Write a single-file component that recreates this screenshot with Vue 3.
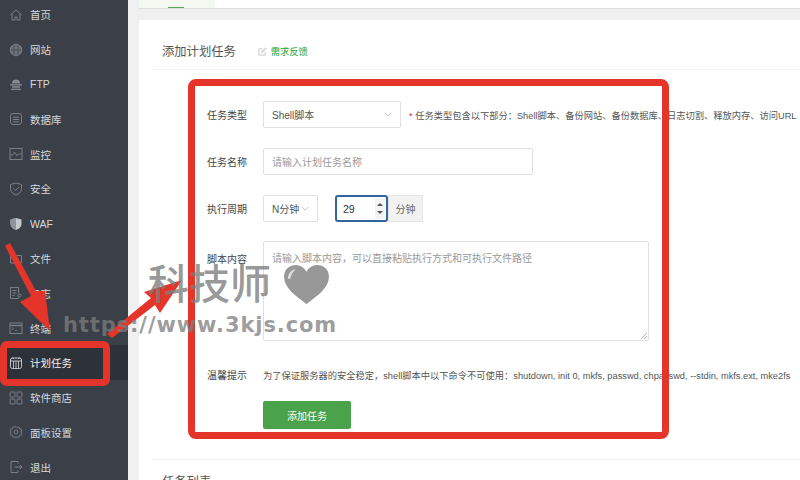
<script setup>
const menus = [
  { name: "首页", icon: "home" },
  { name: "网站", icon: "globe" },
  { name: "FTP", icon: "ftp" },
  { name: "数据库", icon: "db" },
  { name: "监控", icon: "monitor" },
  { name: "安全", icon: "safe" },
  { name: "WAF", icon: "waf" },
  { name: "文件", icon: "file" },
  { name: "日志", icon: "log" },
  { name: "终端", icon: "term" },
  { name: "计划任务", icon: "cron", active: true },
  { name: "软件商店", icon: "soft" },
  { name: "面板设置", icon: "gear" },
  { name: "退出", icon: "exit" },
];
</script>

<template>
  <div class="page">
    <aside class="sidebar">
      <ul class="menu">
        <li v-for="m in menus" :key="m.name" :class="{ active: m.active }">
          <svg class="icon" viewBox="0 0 14 14" fill="none" stroke="#79808a" stroke-width="1">
            <path v-if="m.icon === 'home'" d="M1.5 7 7 2l5.500 5M3 6v6h3V9h2v3h3V6" />
            <g v-else-if="m.icon === 'globe'">
              <circle cx="7" cy="7" r="5.800" fill="#6b727b" />
              <path d="M5 1.800v10.400M9 1.800v10.400M1.500 7h11" stroke="#4a5159" />
            </g>
            <g v-else-if="m.icon === 'ftp'">
              <path d="M3 6.500a4 4 0 0 1 8 0z" fill="#858b93" stroke="none" />
              <path d="M1 7.800h12M3 10h8M2 12.300h10" stroke="#858b93" stroke-width="1.300" />
            </g>
            <g v-else-if="m.icon === 'db'">
              <rect x="1.500" y="1.500" width="11" height="11" rx="2.500" />
              <path d="M4 5.200h6M4 7.500h6M4 9.800h6" />
            </g>
            <g v-else-if="m.icon === 'monitor'">
              <rect x="1" y="1.500" width="12" height="11" />
              <path d="M1 8h3l1.500-3L8 9l1-2h4" stroke-width=".8" />
            </g>
            <path v-else-if="m.icon === 'safe'" d="M7 1 12.500 2.500V7c0 3-2.500 5-5.500 6C4 12 1.500 10 1.500 7V2.500zM4.500 6.500 6.500 8.500 9.800 5.200" />
            <g v-else-if="m.icon === 'waf'">
              <path d="M7 1 12.500 2.500V7c0 3-2.500 5-5.500 6C4 12 1.500 10 1.500 7V2.500z" fill="#c4c8cc" stroke="none" />
              <path d="M7 1V13C4 12 1.500 10 1.500 7V2.500z" fill="#8e949b" stroke="none" />
            </g>
            <path v-else-if="m.icon === 'file'" d="M1.500 3h4l1 1.500h6V12h-11z" />
            <g v-else-if="m.icon === 'log'">
              <path d="M9.500 11.500v1h-8v-11h8V7" />
              <path d="M3.500 4.500h4M3.500 7h4M3.500 9.500h2" />
              <circle cx="10.500" cy="9.500" r="1.500" />
            </g>
            <g v-else-if="m.icon === 'term'">
              <rect x="1" y="2" width="12" height="10.500" />
              <path d="M1 4.500h12" stroke-width="1.400" />
              <path d="m3 6.500 1.500 1.300L3 9M6 9.500h2" stroke-width=".8" />
            </g>
            <g v-else-if="m.icon === 'cron'">
              <rect x="1.500" y="2" width="11" height="10.500" rx="2" stroke="#c2c6cb" />
              <path d="M1.500 5h11M4.500 5v7.500M7 5v7.500M9.500 5v7.500M4 1v2M10 1v2" stroke="#c2c6cb" stroke-width=".9" />
            </g>
            <g v-else-if="m.icon === 'soft'">
              <rect x="1" y="1" width="5" height="5" rx=".8" />
              <rect x="8" y="1" width="5" height="5" rx=".8" />
              <rect x="1" y="8" width="5" height="5" rx=".8" />
              <rect x="8" y="8" width="5" height="5" rx=".8" />
            </g>
            <g v-else-if="m.icon === 'gear'">
              <path d="M7 1.200 8.300 2.600 10.200 2.200 10.800 4 12.700 4.700 12.200 6.600 13 7 12.200 8.400 12.700 9.800 10.800 10.400 10.200 12.200 8.300 11.800 7 13 5.700 11.800 3.800 12.200 3.200 10.400 1.300 9.800 1.800 8.400 1 7 1.800 5.600 1.300 4.200 3.200 3.600 3.800 1.800 5.700 2.200z" />
              <circle cx="7" cy="7" r="2" />
            </g>
            <path v-else d="M9 3.500V1.500H2v11h7v-2M5.500 7H13M11 5l2 2-2 2" />
          </svg>
          <span>{{ m.name }}</span>
        </li>
      </ul>
    </aside>

    <main class="main">
      <div class="topbar">
        <div class="tab"></div>
      </div>
      <section class="card">
        <header class="head">
          <h2>添加计划任务</h2>
          <svg class="edit" viewBox="0 0 10 10" fill="none" stroke="#b5b5b5" stroke-width=".8">
            <path d="M8 5.500V9H1V2h4M4 6l.5-1.500L8.200 1 9 1.800 5.500 5.500z" />
          </svg>
          <a>需求反馈</a>
        </header>

        <div class="form">
          <div class="row type-row">
            <label>任务类型</label>
            <div class="select wide">
              <span>Shell脚本</span>
              <svg class="caret" viewBox="0 0 10 6" fill="none" stroke="#b5b5b5"><path d="m1 1 4 4 4-4" /></svg>
            </div>
            <p class="hint"><b>*</b> 任务类型包含以下部分：Shell脚本、备份网站、备份数据库、日志切割、释放内存、访问URL</p>
          </div>

          <div class="row name-row">
            <label>任务名称</label>
            <div class="input name">请输入计划任务名称</div>
          </div>

          <div class="row period-row">
            <label>执行周期</label>
            <div class="select short">
              <span>N分钟</span>
              <svg class="caret" viewBox="0 0 10 6" fill="none" stroke="#b5b5b5"><path d="m1 1 4 4 4-4" /></svg>
            </div>
            <div class="number">
              <span>29</span>
              <div class="spin">
                <i class="up"></i>
                <i class="down"></i>
              </div>
            </div>
            <div class="addon">分钟</div>
          </div>

          <div class="row script-row">
            <label>脚本内容</label>
            <div class="textarea">
              请输入脚本内容，可以直接粘贴执行方式和可执行文件路径
              <svg class="grip" viewBox="0 0 8 8" stroke="#888" stroke-width=".8"><path d="M1 8 8 1M4.500 8 8 4.500" /></svg>
            </div>
          </div>

          <div class="row tip-row">
            <label>温馨提示</label>
            <p class="tip">为了保证服务器的安全稳定，shell脚本中以下命令不可使用：shutdown, init 0, mkfs, passwd, chpasswd, --stdin, mkfs.ext, mke2fs</p>
          </div>

          <button class="submit">添加任务</button>
        </div>

        <h2 class="list-title">任务列表</h2>
      </section>
    </main>

    <!-- 标注和水印 -->
    <div class="mark-box"></div>
    <div class="mark-menu"></div>
    <svg class="arrows" viewBox="0 0 800 480">
      <path d="M5 246 10 243 36 291 45 291 50 331 20 302 31 296z" fill="#e5352a" />
      <path d="M107 334 151 298 144 292 182 280 160 313 155 305 112 338z" fill="#e5352a" />
    </svg>
    <div class="wm-title">科技师</div>
    <svg class="wm-heart" viewBox="0 0 48 42">
      <path d="M24 41C12 32 1 24 1 13 1 5 7 1 13 1c5 0 9 3 11 7 2-4 6-7 11-7 6 0 12 4 12 12 0 11-11 19-23 28z" fill="#989898" />
      <path d="M5 15c0-5 3-9 8-10-3 3-5 6-5.500 10z" fill="#dedede" />
    </svg>
    <div class="wm-url">https://www.3kjs.com</div>
  </div>
</template>

<style>
html,
body {
  margin: 0;
  overflow: hidden;
}
</style>

<style scoped>
.page {
  position: relative;
  display: flex;
  width: 800px;
  height: 480px;
  overflow: hidden;
  font-family: "Liberation Sans", "Noto Sans CJK SC", sans-serif;
  background: #f0f0f0;
  color: #555;
}
.sidebar {
  flex: none;
  width: 128px;
  background: #3b4048;
}
.menu {
  list-style: none;
  margin: -2.500px 0 0;
  padding: 0;
}
.menu li {
  display: flex;
  align-items: center;
  height: 34.8px;
  padding-left: 9px;
  font-size: 10.500px;
  color: #d6d8da;
}
.menu li.active {
  background: #2d3138;
  color: #f2f2f2;
}
.icon {
  flex: none;
  width: 14px;
  height: 14px;
  margin-right: 7px;
}
.main {
  flex: 1;
  min-width: 0;
  padding-left: 11px;
}
.topbar {
  height: 8px;
  background: #fff;
  border-bottom: 1px solid #dcdcdc;
  margin-bottom: 11px;
}
.tab {
  position: relative;
  width: 76px;
  height: 8px;
  background: #f3f8f1;
}
.tab::after {
  content: "";
  position: absolute;
  left: 29px;
  bottom: 0;
  width: 16px;
  height: 1px;
  background: #5aa55a;
}
.card {
  height: 460px;
  background: #fff;
}
.head {
  display: flex;
  align-items: center;
  height: 36px;
  margin-left: 13px;
  padding: 13px 0 0 10px;
  border-bottom: 1px solid #f2f2f2;
}
h2 {
  margin: 0;
  font-size: 12.300px;
  font-weight: 400;
  color: #555;
}
.edit {
  width: 9px;
  height: 9px;
  margin: 0 4px 0 22px;
}
.head a {
  font-size: 9.250px;
  color: #20a53a;
}
.form {
  padding: 31px 0 0 68px;
  white-space: nowrap;
}
.row {
  display: flex;
  align-items: center;
}
label {
  flex: none;
  width: 56px;
  font-size: 10px;
  color: #444;
}
.select,
.input,
.textarea {
  box-sizing: border-box;
  border: 1px solid #e0e0e0;
  border-radius: 2px;
  background: #fff;
  font-size: 10px;
}
.select {
  display: flex;
  align-items: center;
  justify-content: space-between;
  height: 27px;
  padding: 0 8px;
  color: #555;
}
.select.wide {
  width: 138px;
}
.select.short {
  width: 55px;
}
.caret {
  width: 8px;
  height: 5px;
}
.hint {
  margin: 0 0 0 8px;
  font-size: 9.250px;
  color: #555;
}
.hint b {
  color: #e02020;
  font-weight: 400;
}
.name-row {
  margin-top: 20px;
}
.input {
  display: flex;
  align-items: center;
  height: 27px;
  padding-left: 8px;
  color: #999;
}
.input.name {
  width: 270px;
}
.period-row {
  margin-top: 20px;
}
.number {
  box-sizing: border-box;
  display: flex;
  align-items: center;
  justify-content: space-between;
  width: 53px;
  height: 27px;
  margin-left: 17px;
  padding: 0 1px 0 6px;
  border: 2px solid #34659f;
  border-radius: 3px;
  font-size: 10.500px;
  color: #333;
}
.spin {
  display: flex;
  flex-direction: column;
  align-items: center;
  justify-content: space-between;
  box-sizing: border-box;
  width: 10px;
  height: 21px;
  padding: 5px 0;
  background: #f3f3f3;
}
.spin i {
  width: 0;
  height: 0;
  border-left: 3px solid transparent;
  border-right: 3px solid transparent;
}
.spin .up {
  border-bottom: 3px solid #555;
}
.spin .down {
  border-top: 3px solid #555;
}
.addon {
  box-sizing: border-box;
  display: flex;
  align-items: center;
  justify-content: center;
  width: 35px;
  height: 27px;
  background: #f2f2f2;
  border: 1px solid #e6e6e6;
  font-size: 10px;
  color: #666;
}
.script-row {
  align-items: flex-start;
  margin-top: 19px;
}
.script-row label {
  margin-top: 10px;
}
.textarea {
  position: relative;
  width: 386px;
  height: 100px;
  padding: 8px 8px;
  color: #999;
}
.grip {
  position: absolute;
  right: 1px;
  bottom: 1px;
  width: 7px;
  height: 7px;
}
.tip-row {
  margin-top: 26px;
}
.tip {
  margin: 0;
  font-size: 9.250px;
  color: #555;
}
.submit {
  display: block;
  width: 88px;
  height: 28px;
  margin: 19px 0 0 56px;
  padding: 0;
  border: 0;
  border-radius: 2px;
  background: #4aa24a;
  color: #fff;
  font: inherit;
  font-size: 10px;
}
.list-title {
  margin: 30px 0 0 13px;
  padding: 12px 0 0 10px;
  border-top: 1px solid #f2f2f2;
}
.mark-box {
  position: absolute;
  left: 188px;
  top: 79px;
  box-sizing: border-box;
  width: 481px;
  height: 360px;
  border: 7.500px solid #e5352a;
  border-radius: 8px;
}
.mark-menu {
  position: absolute;
  left: 0;
  top: 341px;
  box-sizing: border-box;
  width: 110px;
  height: 45px;
  border: 7px solid #e5352a;
  border-radius: 7px;
}
.arrows {
  position: absolute;
  left: 0;
  top: 0;
  width: 800px;
  height: 480px;
}
.wm-title {
  position: absolute;
  left: 148px;
  top: 258px;
  font-size: 41px;
  font-weight: 500;
  line-height: 54px;
  color: rgba(125, 125, 125, 0.8);
}
.wm-heart {
  position: absolute;
  left: 283px;
  top: 264px;
  width: 47px;
  height: 41px;
}
.wm-url {
  position: absolute;
  left: 63px;
  top: 310px;
  font-family: "DejaVu Sans", sans-serif;
  font-size: 21px;
  font-weight: 700;
  line-height: 30px;
  letter-spacing: 0.9px;
  color: rgba(125, 125, 125, 0.75);
}
</style>
